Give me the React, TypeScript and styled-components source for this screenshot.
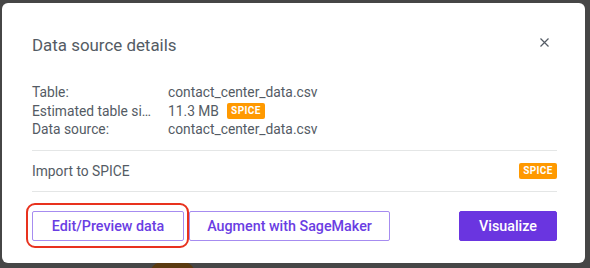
import React from "react";
import styled, { createGlobalStyle } from "styled-components";

const Global = createGlobalStyle`
  html, body { margin: 0; padding: 0; }
  body {
    background: #464646;
    width: 590px;
    height: 268px;
    overflow: hidden;
    font-family: Roboto, "Liberation Sans", Arial, sans-serif;
  }
`;

const Backdrop = styled.div`
  position: relative;
  width: 590px;
  height: 268px;
  padding: 3px 5px 0 2px;
  box-sizing: border-box;
`;

const Blob = styled.div`
  position: absolute;
  left: 150px;
  top: 262px;
  width: 45px;
  height: 12px;
  border-radius: 14px 14px 0 0;
  background: #5a3a10;
`;

const Modal = styled.div`
  position: relative;
  z-index: 1;
  width: 583px;
  height: 260px;
  box-sizing: border-box;
  background: #ffffff;
  border-radius: 6px;
  padding: 30px 28px 0 30px;
  display: flex;
  flex-direction: column;
`;

const Header = styled.div`
  display: flex;
  align-items: center;
  justify-content: space-between;
  height: 24px;
`;

const Title = styled.h2`
  margin: 0;
  font-size: 16.9px;
  line-height: 24px;
  font-weight: 400;
  color: #545b64;
`;

const CloseButton = styled.button`
  border: 0;
  background: none;
  padding: 0;
  width: 16px;
  height: 16px;
  margin-right: 5px;
  margin-top: -6px;
  display: flex;
  align-items: center;
  justify-content: center;
  cursor: pointer;
`;

const Details = styled.div`
  margin-top: 26px;
  display: grid;
  grid-template-columns: 136px 1fr;
  grid-auto-rows: 18.5px;
  font-size: 13.8px;
  line-height: 18px;
  color: #545b64;
`;

const Label = styled.div`
  white-space: nowrap;
`;

const Value = styled.div`
  display: flex;
  align-items: center;
  gap: 8px;
`;

const Badge = styled.span`
  display: inline-flex;
  align-items: center;
  justify-content: center;
  height: 16px;
  width: 38px;
  background: #ff9900;
  color: #ffffff;
  border-radius: 2px;
  font-size: 10px;
  font-weight: 700;
  letter-spacing: 0.4px;
`;

const ImportRow = styled.div`
  margin-top: 11px;
  height: 40px;
  border-top: 1px solid #e4e6e6;
  border-bottom: 1px solid #e4e6e6;
  display: flex;
  align-items: center;
  justify-content: space-between;
  font-size: 13.8px;
  color: #545b64;
`;

const Footer = styled.div`
  margin-top: 19px;
  display: flex;
  align-items: center;
  gap: 5px;
`;

const Highlight = styled.div`
  position: relative;
  display: flex;
  &::after {
    content: "";
    position: absolute;
    left: -6px;
    right: -5px;
    top: -8px;
    bottom: -7px;
    border: 2.5px solid #e8321e;
    border-radius: 9px;
    pointer-events: none;
  }
`;

const Button = styled.button<{ $primary?: boolean; $w: number }>`
  height: 30px;
  width: ${(p) => p.$w}px;
  box-sizing: border-box;
  border-radius: 2px;
  border: 1px solid ${(p) => (p.$primary ? "#6a35e0" : "#a68cf0")};
  background: ${(p) => (p.$primary ? "#6a35e0" : "#ffffff")};
  color: ${(p) => (p.$primary ? "#ffffff" : "#6a3de3")};
  font-family: Roboto, "Liberation Sans", Arial, sans-serif;
  font-size: 14.3px;
  font-weight: 500;
  padding: 0;
  cursor: pointer;
  ${(p) => (p.$primary ? "margin-left: auto;" : "")}
`;

export default function App() {
  return (
    <>
      <Global />
      <Backdrop>
        <Blob />
        <Modal>
          <Header>
            <Title>Data source details</Title>
            <CloseButton aria-label="Close">
              <svg width="9" height="9" viewBox="0 0 9 9">
                <path d="M0.5 0.5 L8.5 8.5 M8.5 0.5 L0.5 8.5" stroke="#545b64" strokeWidth="1.2" fill="none" />
              </svg>
            </CloseButton>
          </Header>
          <Details>
            <Label>Table:</Label>
            <Value>contact_center_data.csv</Value>
            <Label title="Estimated table size:">Estimated table si…</Label>
            <Value>
              11.3 MB <Badge>SPICE</Badge>
            </Value>
            <Label>Data source:</Label>
            <Value>contact_center_data.csv</Value>
          </Details>
          <ImportRow>
            <span>Import to SPICE</span>
            <Badge>SPICE</Badge>
          </ImportRow>
          <Footer>
            <Highlight>
              <Button $w={152}>Edit/Preview data</Button>
            </Highlight>
            <Button $w={201}>Augment with SageMaker</Button>
            <Button $primary $w={98}>Visualize</Button>
          </Footer>
        </Modal>
      </Backdrop>
    </>
  );
}
